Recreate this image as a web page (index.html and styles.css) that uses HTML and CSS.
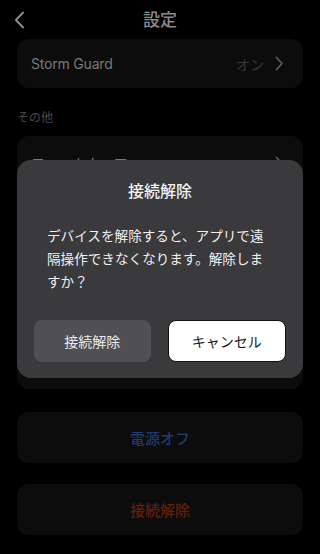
FILE: index.html
```html
<!DOCTYPE html>
<html lang="ja">
<head>
<meta charset="utf-8">
<title>設定</title>
<link rel="stylesheet" href="styles.css">
</head>
<body>
<div class="page">
  <header class="header">
    <span class="back">
      <svg width="12" height="18" viewBox="0 0 12 18"><path d="M9 1.5 L2 9 L9 16.5" fill="none" stroke="#8a8a8a" stroke-width="2" stroke-linecap="round" stroke-linejoin="round"/></svg>
    </span>
    <h1 class="title">設定</h1>
    <span></span>
  </header>

  <section class="card card-row">
    <span class="label">Storm Guard</span>
    <span class="value">オン
      <svg class="chev" width="9" height="15" viewBox="0 0 9 15"><path d="M1.5 1.5 L7 7.5 L1.5 13.5" fill="none" stroke="#5c5c5c" stroke-width="1.8" stroke-linecap="round" stroke-linejoin="round"/></svg>
    </span>
  </section>

  <div class="section-label">その他</div>

  <section class="card card-list">
    <div class="list-row">
      <span class="label">ファームウェア</span>
      <svg class="chev" width="9" height="15" viewBox="0 0 9 15"><path d="M1.5 1.5 L7 7.5 L1.5 13.5" fill="none" stroke="#5c5c5c" stroke-width="1.8" stroke-linecap="round" stroke-linejoin="round"/></svg>
    </div>
  </section>

  <section class="card card-action"><span class="action blue">電源オフ</span></section>
  <section class="card card-action"><span class="action red">接続解除</span></section>

  <div class="dialog">
    <h2 class="dialog-title">接続解除</h2>
    <p class="dialog-msg">デバイスを解除すると、アプリで遠隔操作できなくなります。解除しますか？</p>
    <div class="dialog-buttons">
      <button class="btn btn-dark">接続解除</button>
      <button class="btn btn-light">キャンセル</button>
    </div>
  </div>
</div>
</body>
</html>
```

FILE: styles.css
```css
* { box-sizing: border-box; }
html, body { margin: 0; padding: 0; background: #000; }
body {
  font-family: Inter, "Noto Sans CJK JP", "Noto Sans", sans-serif;
  width: 320px;
  height: 554px;
  overflow: hidden;
}
.page {
  position: relative;
  height: 554px;
  display: flex;
  flex-direction: column;
}
.header {
  height: 39px;
  display: grid;
  grid-template-columns: 1fr auto 1fr;
  align-items: center;
}
.back {
  padding-left: 14px;
  display: flex;
  align-items: center;
}
.title {
  margin: 0;
  font-size: 17px;
  font-weight: 500;
  color: #8c8c8c;
  line-height: 20px;
}
.card {
  margin: 0 17px;
  background: #0c0c0c;
  border-radius: 12px;
}
.card-row {
  height: 49px;
  display: flex;
  align-items: center;
  justify-content: space-between;
  padding: 0 19px 0 14px;
}
.label {
  font-size: 14px;
  color: #7a7a7a;
  letter-spacing: -0.2px;
}
.value {
  display: flex;
  align-items: center;
  gap: 11px;
  font-size: 14px;
  color: #393939;
}
.chev { display: block; }
.section-label {
  margin: 22px 17px 10px;
  font-size: 12px;
  line-height: 16px;
  color: #4a4a4a;
}
.card-list {
  height: 253px;
}
.list-row {
  height: 54px;
  display: flex;
  align-items: center;
  justify-content: space-between;
  padding: 0 19px 0 14px;
}
.card-action {
  height: 51px;
  margin-top: 23px;
  display: flex;
  align-items: center;
  justify-content: center;
}
.card-action + .card-action { margin-top: 21px; }
.action {
  font-size: 15px;
  font-weight: 500;
}
.blue { color: #1e3a70; }
.red { color: #641f0b; }

.dialog {
  position: absolute;
  left: 17px;
  top: 160px;
  width: 286px;
  height: 218px;
  background: #3a3a3d;
  border-radius: 14px;
  padding: 22px 17px 16px;
  display: flex;
  flex-direction: column;
}
.dialog-title {
  margin: 0;
  text-align: center;
  font-size: 16px;
  line-height: 18px;
  font-weight: 500;
  color: #f2f2f2;
}
.dialog-msg {
  margin: 25px 13px 0;
  font-size: 13.6px;
  line-height: 23px;
  color: #f0f0f0;
}
.dialog-buttons {
  margin-top: auto;
  display: flex;
  gap: 17px;
}
.btn {
  flex: 1;
  height: 42px;
  border-radius: 8px;
  font-family: Inter, "Noto Sans CJK JP", sans-serif;
  font-size: 14px;
  cursor: pointer;
}
.btn-dark {
  background: #505053;
  border: none;
  color: #e8e8e8;
}
.btn-light {
  background: #fff;
  border: 1px solid #111;
  color: #1a1a1a;
}
```
